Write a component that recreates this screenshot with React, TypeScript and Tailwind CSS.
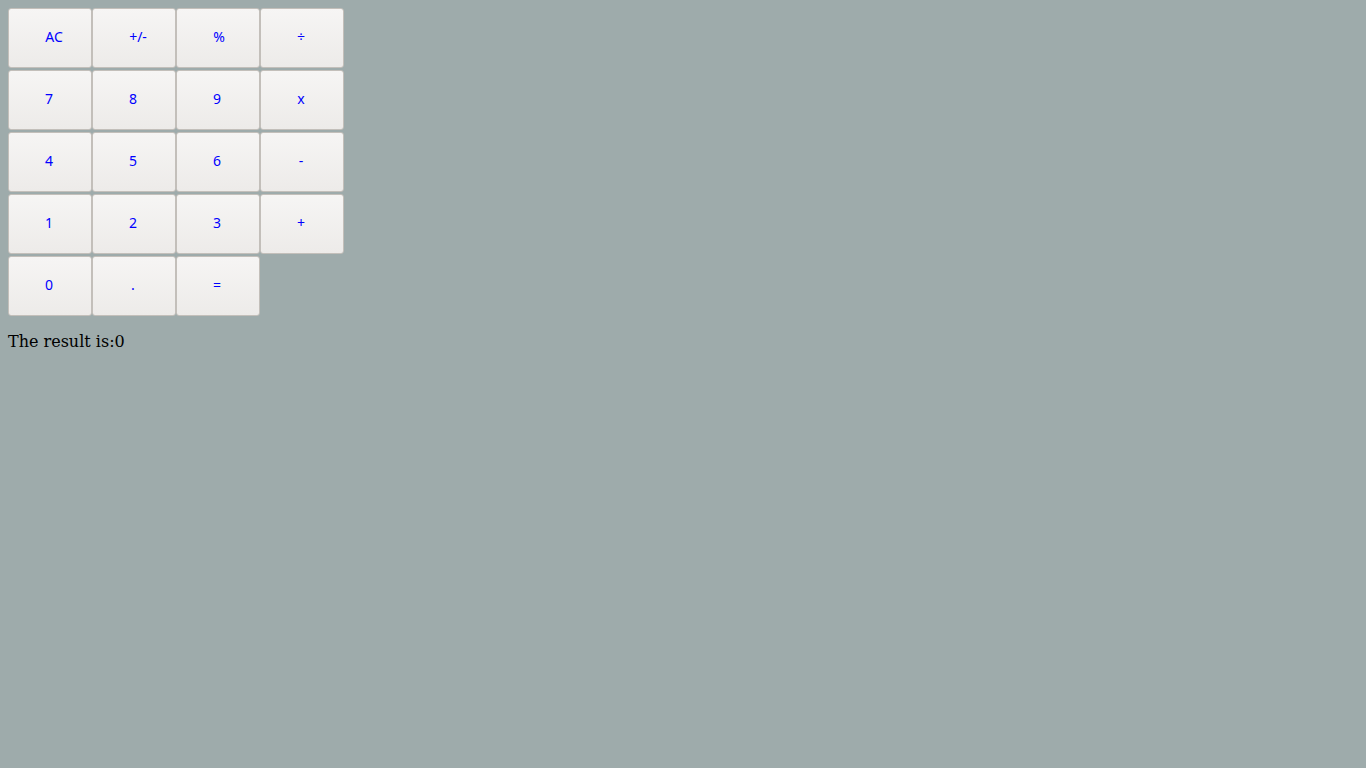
import React from "react";

const rows: { label: string; shift?: number }[][] = [
  [{ label: "AC", shift: 10 }, { label: "+/-", shift: 10 }, { label: "%", shift: 4 }, { label: "÷" }],
  [{ label: "7" }, { label: "8" }, { label: "9" }, { label: "x" }],
  [{ label: "4" }, { label: "5" }, { label: "6" }, { label: "-" }],
  [{ label: "1" }, { label: "2" }, { label: "3" }, { label: "+" }],
  [{ label: "0" }, { label: "." }, { label: "=" }],
];

export default function App() {
  return (
    <div className="min-h-[768px] w-full bg-[#9eabab] p-2">
      <div className="flex flex-col gap-[2px]">
        {rows.map((row, i) => (
          <div key={i} className="flex">
            {row.map((b) => (
              <button
                key={b.label}
                className="h-[60px] w-[84px] rounded-[3px] border border-[#c3bfba] bg-gradient-to-b from-[#f6f5f4] to-[#edebe9] pr-[2px] pb-[3px] text-[14px] text-[#0000ff] [font-family:'Noto_Sans',sans-serif]"
                style={b.shift ? { paddingLeft: b.shift } : undefined}
              >
                {b.label}
              </button>
            ))}
          </div>
        ))}
      </div>
      <p className="mt-[15px] text-[16px] leading-[22px] text-black [font-family:'DejaVu_Serif',serif]">
        The result is:0
      </p>
    </div>
  );
}
